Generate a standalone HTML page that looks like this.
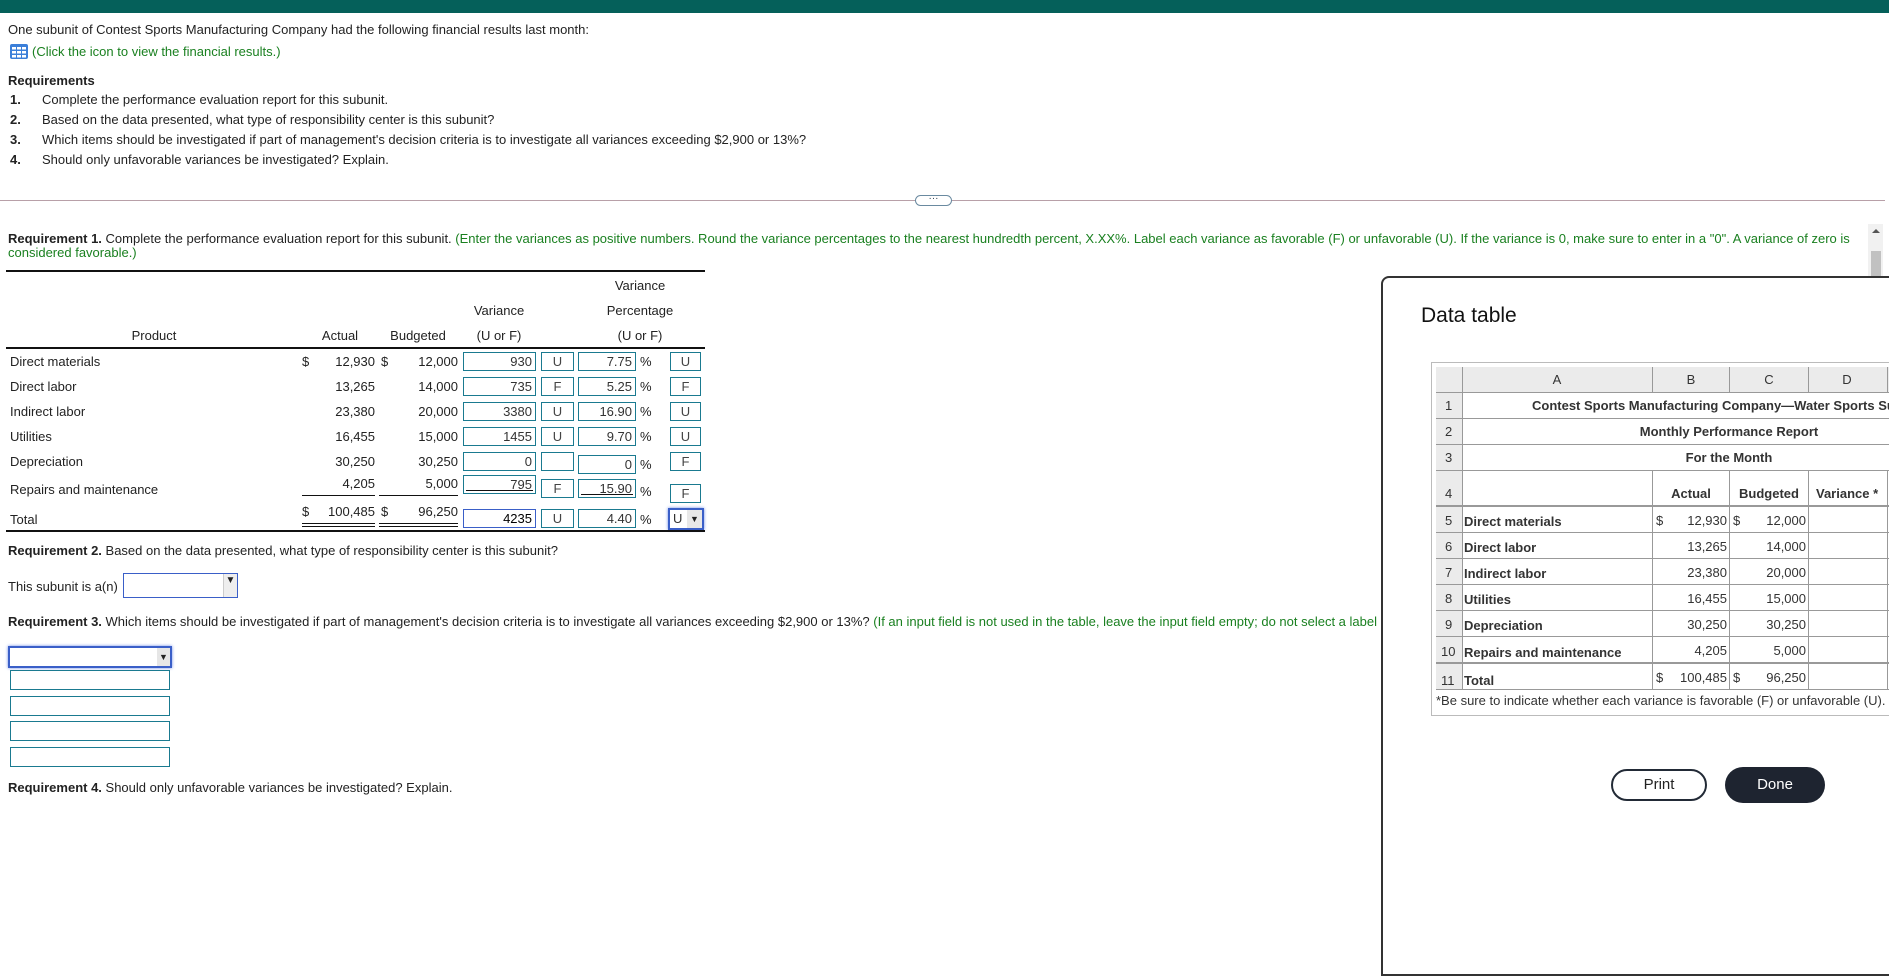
<!DOCTYPE html>
<html><head><meta charset="utf-8"><style>
*{box-sizing:border-box}
body{margin:0;width:1889px;height:811px;overflow:hidden;background:#fff;font-family:"Liberation Sans",Arial,sans-serif;font-size:13px;color:#222;position:relative}
.a{position:absolute;white-space:nowrap;line-height:16px}
.g{color:#1a8020}
.b{font-weight:bold}
.c{transform:translateX(-50%)}
.r{text-align:right}
.box{position:absolute;border:1px solid #1a7a90;height:19px;background:#fff;text-align:right;padding-right:3px;line-height:17px;font-size:13px;color:#333}
.ub{position:absolute;border:1px solid #1a7a90;height:19px;width:33px;text-align:center;line-height:17px;color:#444}
.hl{position:absolute;height:0;border-top:1px solid #111}
.tin{position:absolute;left:10px;width:160px;height:20px;border:1px solid #1a7a90}
#modal{position:absolute;left:1381px;top:276px;width:520px;height:700px;border:2px solid #333;border-radius:8px 0 0 0;background:#fff}
.dt{position:absolute;left:1431px;top:362px;width:470px;height:354px;border:1px solid #bbb;background:#fff}
.cell{position:absolute;font-size:13px;color:#333;line-height:16px;white-space:nowrap}
.vl{position:absolute;width:1px;background:#999}
.hh{position:absolute;height:1px;background:#999}
</style></head><body>
<div style="position:absolute;left:0;top:0;width:1889px;height:13px;background:#05605a"></div>
<div class="a" style="left:8px;top:22px">One subunit of Contest Sports Manufacturing Company had the following financial results last month:</div>
<svg style="position:absolute;left:10px;top:44px" width="18" height="15" viewBox="0 0 18 15"><rect x="0" y="0" width="18" height="15" rx="2" fill="#3b7fd9"/><g fill="#fff"><rect x="2" y="3" width="4" height="2.5"/><rect x="7" y="3" width="4" height="2.5"/><rect x="12" y="3" width="4" height="2.5"/><rect x="2" y="7" width="4" height="2.5"/><rect x="7" y="7" width="4" height="2.5"/><rect x="12" y="7" width="4" height="2.5"/><rect x="2" y="11" width="4" height="2.5"/><rect x="7" y="11" width="4" height="2.5"/><rect x="12" y="11" width="4" height="2.5"/></g></svg>
<div class="a g" style="left:32px;top:44px">(Click the icon to view the financial results.)</div>
<div class="a b" style="left:8px;top:73px">Requirements</div>
<div class="a b" style="left:10px;top:92px">1.</div><div class="a" style="left:42px;top:92px">Complete the performance evaluation report for this subunit.</div>
<div class="a b" style="left:10px;top:112px">2.</div><div class="a" style="left:42px;top:112px">Based on the data presented, what type of responsibility center is this subunit?</div>
<div class="a b" style="left:10px;top:132px">3.</div><div class="a" style="left:42px;top:132px">Which items should be investigated if part of management's decision criteria is to investigate all variances exceeding $2,900 or 13%?</div>
<div class="a b" style="left:10px;top:152px">4.</div><div class="a" style="left:42px;top:152px">Should only unfavorable variances be investigated? Explain.</div>
<div style="position:absolute;left:0;top:200px;width:1885px;height:1px;background:#b8a0a8"></div>
<div style="position:absolute;left:915px;top:195px;width:37px;height:11px;border:1px solid #6a8aa0;border-radius:6px;background:#fff;font-size:10px;line-height:6px;text-align:center;color:#345">···</div>
<div class="a" style="left:8px;top:231px"><b>Requirement 1.</b> Complete the performance evaluation report for this subunit. <span class="g">(Enter the variances as positive numbers. Round the variance percentages to the nearest hundredth percent, X.XX%. Label each variance as favorable (F) or unfavorable (U). If the variance is 0, make sure to enter in a "0". A variance of zero is</span></div>
<div class="a g" style="left:8px;top:245px">considered favorable.)</div>
<div style="position:absolute;left:1868px;top:224px;width:15px;height:600px;background:#f1f1f1"></div>
<div style="position:absolute;left:1871px;top:251px;width:10px;height:25px;background:#c1c1c1"></div>
<div style="position:absolute;left:1872px;top:229px;width:0;height:0;border-left:4px solid transparent;border-right:4px solid transparent;border-bottom:4px solid #555"></div>

<div class="hl" style="left:6px;top:270px;width:699px;border-top-width:2px"></div>
<div class="a c" style="left:640px;top:278px">Variance</div>
<div class="a c" style="left:499px;top:303px">Variance</div>
<div class="a c" style="left:640px;top:303px">Percentage</div>
<div class="a c" style="left:154px;top:328px">Product</div>
<div class="a c" style="left:340px;top:328px">Actual</div>
<div class="a c" style="left:418px;top:328px">Budgeted</div>
<div class="a c" style="left:499px;top:328px">(U or F)</div>
<div class="a c" style="left:640px;top:328px">(U or F)</div>
<div class="hl" style="left:6px;top:347px;width:699px;border-top-width:2px"></div>

<div class="a" style="left:10px;top:354px">Direct materials</div>
<div class="a" style="left:10px;top:379px">Direct labor</div>
<div class="a" style="left:10px;top:404px">Indirect labor</div>
<div class="a" style="left:10px;top:429px">Utilities</div>
<div class="a" style="left:10px;top:454px">Depreciation</div>
<div class="a" style="left:10px;top:482px">Repairs and maintenance</div>
<div class="a" style="left:10px;top:512px">Total</div>
<div class="a" style="left:302px;top:354px">$</div><div class="a" style="left:381px;top:354px">$</div>
<div class="a" style="left:302px;top:504px">$</div><div class="a" style="left:381px;top:504px">$</div>
<div class="a r" style="left:305px;width:70px;top:354px">12,930</div><div class="a r" style="left:390px;width:68px;top:354px">12,000</div>
<div class="a r" style="left:305px;width:70px;top:379px">13,265</div><div class="a r" style="left:390px;width:68px;top:379px">14,000</div>
<div class="a r" style="left:305px;width:70px;top:404px">23,380</div><div class="a r" style="left:390px;width:68px;top:404px">20,000</div>
<div class="a r" style="left:305px;width:70px;top:429px">16,455</div><div class="a r" style="left:390px;width:68px;top:429px">15,000</div>
<div class="a r" style="left:305px;width:70px;top:454px">30,250</div><div class="a r" style="left:390px;width:68px;top:454px">30,250</div>
<div class="a r" style="left:305px;width:70px;top:476px">4,205</div><div class="a r" style="left:390px;width:68px;top:476px">5,000</div>
<div class="a r" style="left:305px;width:70px;top:504px">100,485</div><div class="a r" style="left:390px;width:68px;top:504px">96,250</div>
<div class="hl" style="left:302px;top:495px;width:73px"></div><div class="hl" style="left:379px;top:495px;width:79px"></div>
<div class="hl" style="left:302px;top:523px;width:73px"></div><div class="hl" style="left:379px;top:523px;width:79px"></div>
<div class="hl" style="left:302px;top:526px;width:73px"></div><div class="hl" style="left:379px;top:526px;width:79px"></div>

<div class="box" style="left:463px;top:352px;width:73px">930</div><div class="ub" style="left:541px;top:352px">U</div><div class="box" style="left:578px;top:352px;width:58px">7.75</div><div class="a" style="left:640px;top:354px">%</div><div class="ub" style="left:670px;top:352px;width:31px">U</div>
<div class="box" style="left:463px;top:377px;width:73px">735</div><div class="ub" style="left:541px;top:377px">F</div><div class="box" style="left:578px;top:377px;width:58px">5.25</div><div class="a" style="left:640px;top:379px">%</div><div class="ub" style="left:670px;top:377px;width:31px">F</div>
<div class="box" style="left:463px;top:402px;width:73px">3380</div><div class="ub" style="left:541px;top:402px">U</div><div class="box" style="left:578px;top:402px;width:58px">16.90</div><div class="a" style="left:640px;top:404px">%</div><div class="ub" style="left:670px;top:402px;width:31px">U</div>
<div class="box" style="left:463px;top:427px;width:73px">1455</div><div class="ub" style="left:541px;top:427px">U</div><div class="box" style="left:578px;top:427px;width:58px">9.70</div><div class="a" style="left:640px;top:429px">%</div><div class="ub" style="left:670px;top:427px;width:31px">U</div>
<div class="box" style="left:463px;top:452px;width:73px">0</div><div class="ub" style="left:541px;top:452px"></div><div class="box" style="left:578px;top:455px;width:58px">0</div><div class="a" style="left:640px;top:457px">%</div><div class="ub" style="left:670px;top:452px;width:31px">F</div>
<div class="box" style="left:463px;top:475px;width:73px">795</div><div class="ub" style="left:541px;top:479px">F</div><div class="box" style="left:578px;top:479px;width:58px">15.90</div><div class="a" style="left:640px;top:484px">%</div><div class="ub" style="left:670px;top:484px;width:31px">F</div>
<div class="hl" style="left:466px;top:490px;width:67px"></div><div class="hl" style="left:581px;top:494px;width:52px"></div>
<div class="box" style="left:463px;top:509px;width:73px;border-color:#3a5fc8;color:#000">4235</div><div class="ub" style="left:541px;top:509px">U</div><div class="box" style="left:578px;top:509px;width:58px">4.40</div><div class="a" style="left:640px;top:512px">%</div>
<div style="position:absolute;left:668px;top:508px;width:36px;height:22px;border:2px solid #3a5fc8;background:#fff;box-shadow:0 0 3px #6a8ae8"><span style="position:absolute;left:3px;top:1px;color:#333">U</span><div style="position:absolute;right:0;top:0;width:15px;height:18px;background:#e8e8e8;font-size:9px;text-align:center;line-height:18px">▼</div></div>
<div class="hl" style="left:6px;top:530px;width:699px;border-top-width:2px"></div>

<div class="a" style="left:8px;top:543px"><b>Requirement 2.</b> Based on the data presented, what type of responsibility center is this subunit?</div>
<div class="a" style="left:8px;top:579px">This subunit is a(n)</div>
<div style="position:absolute;left:123px;top:573px;width:115px;height:25px;border:1px solid #3a5fc8;background:#fff"><div style="position:absolute;right:0;top:0;width:14px;height:23px;background:#eee;border-left:1px solid #ccc;font-size:10px;text-align:center;line-height:14px">▼</div></div>
<div class="a" style="left:8px;top:614px"><b>Requirement 3.</b> Which items should be investigated if part of management's decision criteria is to investigate all variances exceeding $2,900 or 13%? <span class="g">(If an input field is not used in the table, leave the input field empty; do not select a label or enter a zero.)</span></div>
<div style="position:absolute;left:8px;top:646px;width:164px;height:22px;border:2px solid #3a5fc8;background:#fff;box-shadow:0 0 3px #6a8ae8"><div style="position:absolute;right:0;top:0;width:13px;height:18px;background:#e6e6e6;font-size:9px;text-align:center;line-height:18px">▼</div></div>
<div class="tin" style="top:670px"></div>
<div class="tin" style="top:696px"></div>
<div class="tin" style="top:721px"></div>
<div class="tin" style="top:747px"></div>
<div class="a" style="left:8px;top:780px"><b>Requirement 4.</b> Should only unfavorable variances be investigated? Explain.</div>

<div id="modal"></div>
<div class="a" style="left:1421px;top:303px;font-size:21px;line-height:26px;color:#111">Data table</div>
<div class="dt"></div>
<div style="position:absolute;left:1436px;top:367px;width:453px;height:25px;background:#ebebeb"></div>
<div style="position:absolute;left:1436px;top:392px;width:26px;height:297px;background:#ebebeb"></div>
<div class="vl" style="left:1462px;top:367px;height:322px"></div>
<div class="vl" style="left:1652px;top:367px;height:25px"></div><div class="vl" style="left:1729px;top:367px;height:25px"></div><div class="vl" style="left:1808px;top:367px;height:25px"></div><div class="vl" style="left:1887px;top:367px;height:25px"></div>
<div class="vl" style="left:1652px;top:470px;height:219px"></div><div class="vl" style="left:1729px;top:470px;height:219px"></div><div class="vl" style="left:1808px;top:470px;height:219px"></div><div class="vl" style="left:1887px;top:470px;height:219px"></div>
<div class="hh" style="left:1436px;top:392px;width:453px"></div>
<div class="hh" style="left:1436px;top:418px;width:453px"></div>
<div class="hh" style="left:1436px;top:444px;width:453px"></div>
<div class="hh" style="left:1436px;top:470px;width:453px"></div>
<div class="hh" style="left:1436px;top:505px;width:453px;height:2px"></div>
<div class="hh" style="left:1436px;top:532px;width:453px"></div>
<div class="hh" style="left:1436px;top:558px;width:453px"></div>
<div class="hh" style="left:1436px;top:584px;width:453px"></div>
<div class="hh" style="left:1436px;top:610px;width:453px"></div>
<div class="hh" style="left:1436px;top:636px;width:453px"></div>
<div class="hh" style="left:1436px;top:662px;width:453px;height:2px"></div>
<div class="hh" style="left:1436px;top:689px;width:453px"></div>
<div class="cell c" style="left:1557px;top:372px">A</div><div class="cell c" style="left:1691px;top:372px">B</div><div class="cell c" style="left:1769px;top:372px">C</div><div class="cell c" style="left:1847px;top:372px">D</div>
<div class="cell" style="left:1445px;top:398px">1</div><div class="cell" style="left:1445px;top:424px">2</div><div class="cell" style="left:1445px;top:450px">3</div><div class="cell" style="left:1445px;top:486px">4</div>
<div class="cell" style="left:1445px;top:513px">5</div><div class="cell" style="left:1445px;top:539px">6</div><div class="cell" style="left:1445px;top:565px">7</div><div class="cell" style="left:1445px;top:591px">8</div><div class="cell" style="left:1445px;top:617px">9</div><div class="cell" style="left:1441px;top:644px">10</div><div class="cell" style="left:1441px;top:673px">11</div>
<div class="cell b" style="left:1532px;top:398px">Contest Sports Manufacturing Company—Water Sports Subunit</div>
<div class="cell b c" style="left:1729px;top:424px">Monthly Performance Report</div>
<div class="cell b c" style="left:1729px;top:450px">For the Month</div>
<div class="cell b c" style="left:1691px;top:486px">Actual</div><div class="cell b c" style="left:1769px;top:486px">Budgeted</div><div class="cell b" style="left:1816px;top:486px">Variance *</div>
<div class="cell b" style="left:1464px;top:514px">Direct materials</div>
<div class="cell b" style="left:1464px;top:540px">Direct labor</div>
<div class="cell b" style="left:1464px;top:566px">Indirect labor</div>
<div class="cell b" style="left:1464px;top:592px">Utilities</div>
<div class="cell b" style="left:1464px;top:618px">Depreciation</div>
<div class="cell b" style="left:1464px;top:645px">Repairs and maintenance</div>
<div class="cell b" style="left:1464px;top:673px">Total</div>
<div class="cell" style="left:1656px;top:513px">$</div><div class="cell" style="left:1733px;top:513px">$</div>
<div class="cell" style="left:1656px;top:670px">$</div><div class="cell" style="left:1733px;top:670px">$</div>
<div class="cell r" style="left:1660px;width:67px;top:513px">12,930</div><div class="cell r" style="left:1740px;width:66px;top:513px">12,000</div>
<div class="cell r" style="left:1660px;width:67px;top:539px">13,265</div><div class="cell r" style="left:1740px;width:66px;top:539px">14,000</div>
<div class="cell r" style="left:1660px;width:67px;top:565px">23,380</div><div class="cell r" style="left:1740px;width:66px;top:565px">20,000</div>
<div class="cell r" style="left:1660px;width:67px;top:591px">16,455</div><div class="cell r" style="left:1740px;width:66px;top:591px">15,000</div>
<div class="cell r" style="left:1660px;width:67px;top:617px">30,250</div><div class="cell r" style="left:1740px;width:66px;top:617px">30,250</div>
<div class="cell r" style="left:1660px;width:67px;top:643px">4,205</div><div class="cell r" style="left:1740px;width:66px;top:643px">5,000</div>
<div class="cell r" style="left:1660px;width:67px;top:670px">100,485</div><div class="cell r" style="left:1740px;width:66px;top:670px">96,250</div>
<div class="cell" style="left:1436px;top:693px">*Be sure to indicate whether each variance is favorable (F) or unfavorable (U).</div>

<div style="position:absolute;left:1611px;top:769px;width:96px;height:32px;border:2px solid #222a36;border-radius:16px;text-align:center;line-height:28px;font-size:15px;color:#222">Print</div>
<div style="position:absolute;left:1725px;top:767px;width:100px;height:36px;background:#1e2430;border-radius:18px;text-align:center;line-height:36px;font-size:15px;color:#fff">Done</div>
</body></html>
